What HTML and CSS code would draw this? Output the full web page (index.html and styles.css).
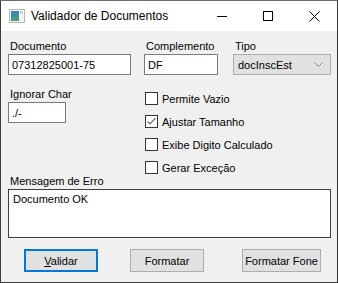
FILE: index.html
```html
<!DOCTYPE html>
<html lang="pt-BR">
<head>
  <meta charset="UTF-8" />
  <title>Validador de Documentos</title>
  <link rel="stylesheet" href="styles.css">
</head>
<body>
  <div class="window">
    <div class="titlebar">
      <svg class="app-icon" width="16" height="14" viewBox="0 0 16 14">
        <defs>
          <linearGradient id="pane" x1="0" y1="0" x2="0" y2="1">
            <stop offset="0" stop-color="#3a7fb4" />
            <stop offset="1" stop-color="#4aa37a" />
          </linearGradient>
        </defs>
        <rect x="0.5" y="0.5" width="15" height="13" fill="#f4f4f4" stroke="#b8b8b8" />
        <rect x="2" y="2" width="8" height="10" fill="url(#pane)" />
        <rect x="11" y="2" width="3" height="3" fill="#c9d4dc" />
      </svg>
      <div class="title">Validador de Documentos</div>
      <div class="caption-buttons">
        <span class="cap-btn"><svg width="10" height="10" viewBox="0 0 10 10"><path d="M0 5.5h10" stroke="#000" /></svg></span>
        <span class="cap-btn"><svg width="10" height="10" viewBox="0 0 10 10"><rect x="0.5" y="0.5" width="9" height="9" fill="none" stroke="#000" /></svg></span>
        <span class="cap-btn"><svg width="11" height="11" viewBox="0 0 11 11"><path d="M0.5 0.5l10 10M10.5 0.5l-10 10" stroke="#000" /></svg></span>
      </div>
    </div>

    <div class="client">
      <div class="top-grid">
        <div class="field doc">
          <label>Documento</label>
          <div class="edit">07312825001-75</div>
        </div>
        <div class="field comp">
          <label>Complemento</label>
          <div class="edit">DF</div>
        </div>
        <div class="field tipo">
          <label>Tipo</label>
          <div class="combo">
            <span>docInscEst</span>
            <svg width="9" height="5" viewBox="0 0 9 5"><path d="M0.5 0.5l4 4 4-4" fill="none" stroke="#8a8a8a" /></svg>
          </div>
        </div>

        <div class="field ignore">
          <label>Ignorar Char</label>
          <div class="edit short">./-</div>
        </div>
        <div class="checks">
          <div class="check"><span class="box"></span>Permite Vazio</div>
          <div class="check"><span class="box"><svg width="11" height="11" viewBox="0 0 11 11"><path d="M1.5 5.5l2.5 2.5 5.5-6" fill="none" stroke="#6e6e6e" stroke-width="1.2" /></svg></span>Ajustar Tamanho</div>
          <div class="check"><span class="box"></span>Exibe Digito Calculado</div>
          <div class="check"><span class="box"></span>Gerar Exceção</div>
        </div>
      </div>

      <div class="field message">
        <label>Mensagem de Erro</label>
        <div class="memo">Documento OK</div>
      </div>

      <div class="buttons">
        <button class="btn default"><u>V</u>alidar</button>
        <button class="btn">Formatar</button>
        <button class="btn wide">Formatar Fone</button>
      </div>
    </div>
  </div>
</body>
</html>
```

FILE: styles.css
```css
* {
  margin: 0;
  padding: 0;
  box-sizing: border-box;
}

body {
  width: 338px;
  height: 283px;
  background: #f0f0f0;
  font-family: 'Liberation Sans', Arial, sans-serif;
  font-size: 11px;
  color: #000;
}

.window {
  width: 338px;
  height: 283px;
  border: 1px solid #3c3c3c;
  border-top-color: #6d6d6d;
  background: #f0f0f0;
  display: flex;
  flex-direction: column;
}

.titlebar {
  height: 30px;
  background: #fff;
  display: flex;
  align-items: center;
  padding-left: 8px;
}

.app-icon {
  margin-top: -1px;
}

.title {
  margin-left: 6px;
  font-size: 12px;
  margin-top: -1px;
}

.caption-buttons {
  margin-left: auto;
  display: flex;
  height: 100%;
}

.cap-btn {
  width: 46px;
  display: flex;
  align-items: center;
  justify-content: center;
}

.client {
  padding: 9px 5px 0 7px;
}

.top-grid {
  display: grid;
  grid-template-columns: 123px 74px 100px;
  column-gap: 13px;
}

.field label {
  display: block;
  height: 14px;
  line-height: 13px;
  padding-left: 2px;
}

.edit {
  height: 21px;
  background: #fff;
  border: 1px solid #7a7a7a;
  padding: 3px 0 0 3px;
  line-height: 14px;
}

.edit.short {
  width: 58px;
}

.tipo {
  margin-left: 2px;
}

.combo {
  height: 21px;
  background: #e1e1e1;
  border: 1px solid #adadad;
  display: flex;
  align-items: center;
  justify-content: space-between;
  padding: 0 7px 0 4px;
}

.ignore {
  margin-top: 13px;
}

.checks {
  grid-column: 2 / 4;
  margin-top: 17px;
  margin-left: 1px;
  display: flex;
  flex-direction: column;
  gap: 10px;
}

.check {
  display: flex;
  align-items: center;
  height: 13px;
}

.box {
  width: 13px;
  height: 13px;
  border: 1px solid #333;
  background: #fff;
  margin-right: 4px;
  display: flex;
  align-items: center;
  justify-content: center;
}

.message {
  margin-top: 1px;
}

.memo {
  height: 49px;
  margin-right: 1px;
  background: #fff;
  border: 1px solid #404040;
  padding: 3px 0 0 4px;
}

.buttons {
  display: flex;
  margin-top: 11px;
  padding-left: 16px;
}

.btn {
  height: 23px;
  width: 74px;
  background: #e1e1e1;
  border: 1px solid #adadad;
  font-family: inherit;
  font-size: 11px;
  color: #000;
  white-space: nowrap;
}

.btn.default {
  border: 2px solid #0078d7;
}

.btn + .btn {
  margin-left: 32px;
}

.btn.wide {
  width: 79px;
  padding: 0;
  margin-left: 38px;
}
```
